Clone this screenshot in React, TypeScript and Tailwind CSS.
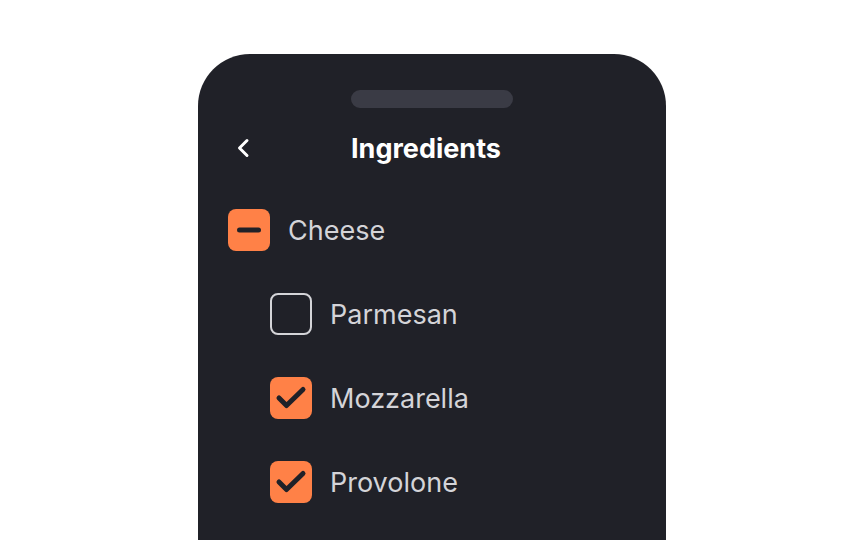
import React from "react";

function Box({ state }: { state: "checked" | "unchecked" | "indeterminate" }) {
  if (state === "unchecked") {
    return <div className="w-[42px] h-[42px] rounded-[8px] border-[2.5px] border-[#d4d4d8] shrink-0" />;
  }
  return (
    <div className="w-[42px] h-[42px] rounded-[8px] bg-[#ff8147] shrink-0">
      <svg width="42" height="42" viewBox="0 0 42 42" fill="none">
        {state === "checked" ? (
          <path d="M9 21 L16.5 28.5 L33 12.5" stroke="#202128" strokeWidth="5" strokeLinecap="round" strokeLinejoin="round" />
        ) : (
          <path d="M11.5 21 L30.5 21" stroke="#202128" strokeWidth="5" strokeLinecap="round" />
        )}
      </svg>
    </div>
  );
}

function Row({ label, state, indent }: { label: string; state: "checked" | "unchecked" | "indeterminate"; indent?: boolean }) {
  return (
    <div className={`flex items-center gap-[18px] h-[42px] ${indent ? "pl-[42px]" : ""}`}>
      <Box state={state} />
      <span className="text-[27px] text-[#d4d4d8] leading-none">{label}</span>
    </div>
  );
}

export default function App() {
  return (
    <div className="w-[864px] h-[540px] bg-white overflow-hidden flex justify-center pt-[54px]" style={{ fontFamily: "Inter, 'Noto Sans', sans-serif" }}>
      <div className="w-[468px] h-[600px] bg-[#202128] rounded-t-[52px] flex flex-col items-center pt-[36px]">
        <div className="w-[162px] h-[18px] rounded-full bg-[#3a3b45]" />
        <div className="w-full relative h-[36px] mt-[22px] flex items-center justify-center">
          <svg className="absolute left-[38px] top-[5px]" width="20" height="26" viewBox="0 0 20 26" fill="none">
            <path d="M11 5.5 L3.5 13 L11 20.5" stroke="white" strokeWidth="3" strokeLinecap="round" strokeLinejoin="round" />
          </svg>
          <span className="text-[27px] font-bold text-white leading-none -ml-[12px]">Ingredients</span>
        </div>
        <div className="w-full flex flex-col gap-[42px] pl-[30px] mt-[43px]">
          <Row label="Cheese" state="indeterminate" />
          <Row label="Parmesan" state="unchecked" indent />
          <Row label="Mozzarella" state="checked" indent />
          <Row label="Provolone" state="checked" indent />
        </div>
      </div>
    </div>
  );
}
